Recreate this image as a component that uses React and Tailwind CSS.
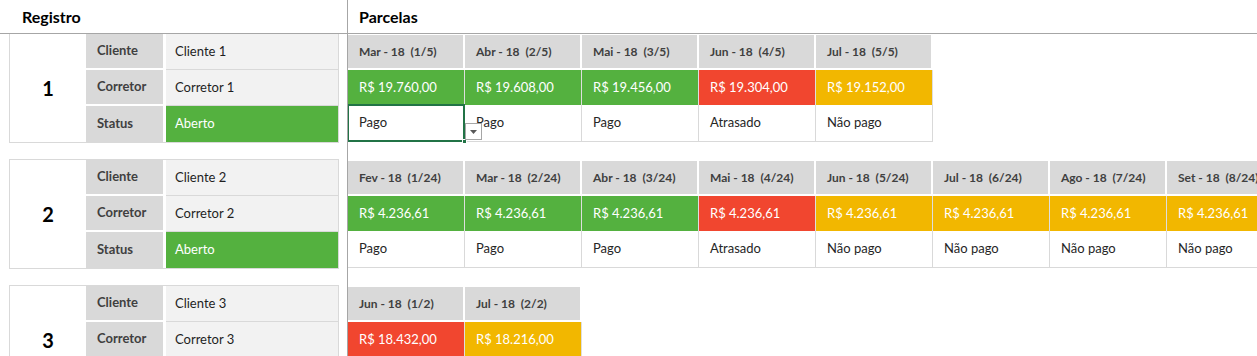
import React from "react";

const colors = {
  g: "bg-[#54b13f]",
  r: "bg-[#f1462f]",
  y: "bg-[#f2b700]",
};

const registros = [
  {
    id: 1,
    cliente: "Cliente 1",
    corretor: "Corretor 1",
    status: "Aberto",
    parcelas: [
      ["Mar - 18", "1/5", "R$ 19.760,00", "g", "Pago"],
      ["Abr - 18", "2/5", "R$ 19.608,00", "g", "Pago"],
      ["Mai - 18", "3/5", "R$ 19.456,00", "g", "Pago"],
      ["Jun - 18", "4/5", "R$ 19.304,00", "r", "Atrasado"],
      ["Jul - 18", "5/5", "R$ 19.152,00", "y", "Não pago"],
    ],
  },
  {
    id: 2,
    cliente: "Cliente 2",
    corretor: "Corretor 2",
    status: "Aberto",
    parcelas: [
      ["Fev - 18", "1/24", "R$ 4.236,61", "g", "Pago"],
      ["Mar - 18", "2/24", "R$ 4.236,61", "g", "Pago"],
      ["Abr - 18", "3/24", "R$ 4.236,61", "g", "Pago"],
      ["Mai - 18", "4/24", "R$ 4.236,61", "r", "Atrasado"],
      ["Jun - 18", "5/24", "R$ 4.236,61", "y", "Não pago"],
      ["Jul - 18", "6/24", "R$ 4.236,61", "y", "Não pago"],
      ["Ago - 18", "7/24", "R$ 4.236,61", "y", "Não pago"],
      ["Set - 18", "8/24", "R$ 4.236,61", "y", "Não pago"],
    ],
  },
  {
    id: 3,
    cliente: "Cliente 3",
    corretor: "Corretor 3",
    status: "Aberto",
    parcelas: [
      ["Jun - 18", "1/2", "R$ 18.432,00", "r", "Atrasado"],
      ["Jul - 18", "2/2", "R$ 18.216,00", "y", "Não pago"],
    ],
  },
];

const RegistroBlock = ({ reg, first }) => (
  <div
    className={`ml-[9px] w-[330px] flex border-x border-b border-[#d9d9d9] ${
      first ? "" : "mt-[16px] border-t"
    }`}
  >
    <div className="w-[76px] flex items-center justify-center text-[20px] font-bold text-black">
      {reg.id}
    </div>
    <div className="w-[77px] flex flex-col text-[13px] font-bold text-[#404040]">
      <div className="h-[36px] pb-[2px]">
        <div className="h-full bg-[#d9d9d9] flex items-center pl-[11px]">Cliente</div>
      </div>
      <div className="h-[36px] pb-[2px]">
        <div className="h-full bg-[#d9d9d9] flex items-center pl-[11px]">Corretor</div>
      </div>
      <div className="h-[36px] bg-[#d9d9d9] flex items-center pl-[11px]">Status</div>
    </div>
    <div className="w-[3px]" />
    <div className="w-[172px] flex flex-col text-[13px]">
      <div className="h-[36px] bg-[#f2f2f2] border-b border-[#d9d9d9] flex items-center pl-[9px] text-[#1f1f1f]">
        {reg.cliente}
      </div>
      <div className="h-[36px] bg-[#f2f2f2] border-b border-[#d9d9d9] flex items-center pl-[9px] text-[#1f1f1f]">
        {reg.corretor}
      </div>
      <div className="h-[36px] bg-[#54b13f] flex items-center pl-[9px] text-white">
        {reg.status}
      </div>
    </div>
  </div>
);

const ParcelaCol = ({ p }) => (
  <div className="w-[117px] shrink-0 flex flex-col">
    <div className="h-[36px] pt-[1px] pb-[2px] pr-[2px]">
      <div className="h-full bg-[#d9d9d9] flex items-center pl-[11px] text-[12px] font-bold text-[#404040] whitespace-pre overflow-hidden">
        {`${p[0]}  (${p[1]})`}
      </div>
    </div>
    <div
      className={`h-[35px] border-r border-[#dedede] flex items-center pl-[11px] text-[13px] text-white whitespace-nowrap ${colors[p[3]]}`}
    >
      {p[2]}
    </div>
    <div className="h-[37px] border-r border-b border-[#d9d9d9] flex items-center pl-[11px] text-[13px] text-[#262626] whitespace-nowrap">
      {p[4]}
    </div>
  </div>
);

export default function App() {
  return (
    <div
      className="w-[1257px] h-[356px] overflow-hidden bg-white flex"
      style={{ fontFamily: "Lato, 'Open Sans', sans-serif" }}
    >
      {/* Registro column */}
      <div className="w-[348px] shrink-0 h-full border-r border-[#a6a6a6]">
        <div className="h-[34px] border-b border-[#a6a6a6] flex items-center pl-[22px] text-[16px] font-bold text-black">
          Registro
        </div>
        {registros.map((reg, i) => (
          <RegistroBlock key={reg.id} reg={reg} first={i === 0} />
        ))}
      </div>

      {/* Parcelas column */}
      <div className="flex-1 min-w-0 h-full overflow-hidden">
        <div className="h-[34px] border-b border-[#a6a6a6] flex items-center pl-[11px] text-[16px] font-bold text-black">
          Parcelas
        </div>
        {registros.map((reg, i) => (
          <div key={reg.id} className={`relative flex ${i === 0 ? "" : "mt-[18px]"}`}>
            {reg.parcelas.map((p, j) => (
              <ParcelaCol key={j} p={p} />
            ))}
            {i === 0 && (
              <>
                {/* selected cell */}
                <div className="absolute left-[-1px] top-[70px] w-[118px] h-[38px] border-2 border-[#217346] pointer-events-none" />
                <div className="absolute left-[114px] top-[105px] w-[5px] h-[5px] bg-[#217346] border border-white" />
                {/* dropdown button */}
                <div className="absolute left-[117px] top-[89px] w-[17px] h-[17px] bg-white border border-[#a6a6a6] flex items-center justify-center">
                  <svg width="7" height="4" viewBox="0 0 7 4">
                    <path d="M0 0h7L3.5 4z" fill="#595959" />
                  </svg>
                </div>
              </>
            )}
          </div>
        ))}
      </div>
    </div>
  );
}
